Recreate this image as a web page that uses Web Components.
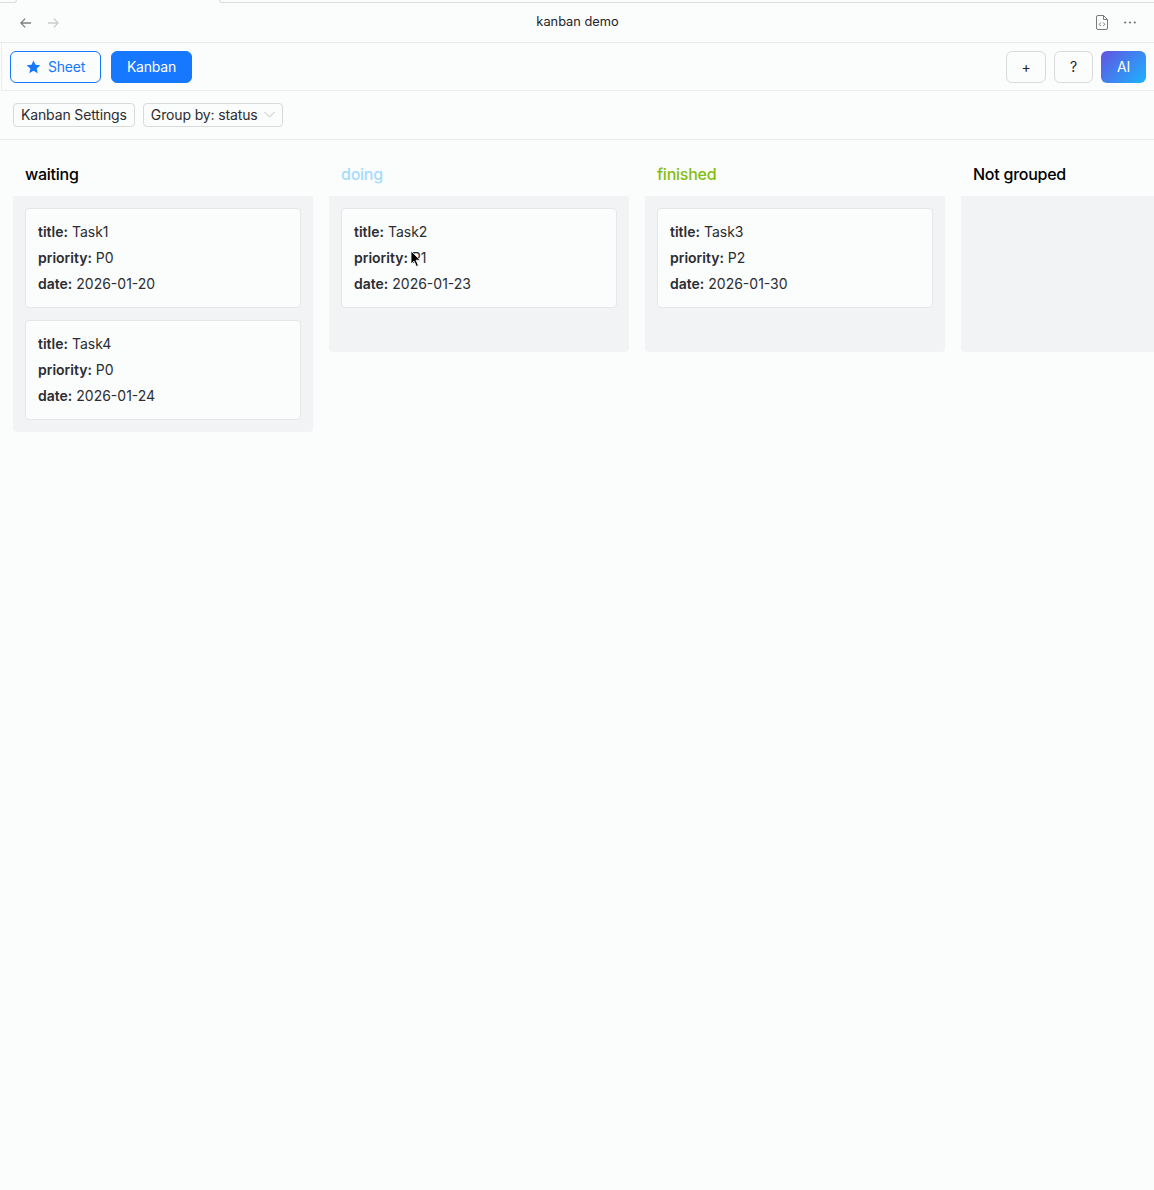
<!DOCTYPE html>
<html lang="en">
<head>
<meta charset="utf-8">
<title>kanban demo</title>
<style>
  html, body { margin: 0; height: 100%; background: #fbfcfc; }
  body { font-family: Inter, "Liberation Sans", sans-serif; color: #1f2329; overflow: hidden; }
</style>
</head>
<body>
<app-titlebar heading="kanban demo"></app-titlebar>
<app-toolbar></app-toolbar>
<app-filterbar></app-filterbar>
<kanban-board>
  <kanban-column heading="waiting" tone="#000000">
    <kanban-card task="Task1" priority="P0" date="2026-01-20"></kanban-card>
    <kanban-card task="Task4" priority="P0" date="2026-01-24"></kanban-card>
  </kanban-column>
  <kanban-column heading="doing" tone="#a5dbff">
    <kanban-card task="Task2" priority="P1" date="2026-01-23">
      <svg slot="cursor" width="12" height="18" viewBox="0 0 12 18"><path d="M1 1v13l3-3 2.400 5.400 2-.9L6 10.200h4.300z" fill="#000" stroke="#fff" stroke-width=".8"/></svg>
    </kanban-card>
  </kanban-column>
  <kanban-column heading="finished" tone="#84bc12">
    <kanban-card task="Task3" priority="P2" date="2026-01-30"></kanban-card>
  </kanban-column>
  <kanban-column heading="Not grouped" tone="#000000"></kanban-column>
</kanban-board>
<script>
  "use strict";

  function define(name, css, html, setup) {
    customElements.define(name, class extends HTMLElement {
      constructor() {
        super();
        this.attachShadow({ mode: "open" });
      }
      connectedCallback() {
        this.shadowRoot.innerHTML = "<style>" + css + "</style>" + html;
        if (setup) setup(this, this.shadowRoot);
      }
    });
  }

  define("app-tabstrip",
    ":host{display:flex;height:3px}" +
    "div{box-sizing:border-box;height:3px;border:0 solid #dcdddf}" +
    ".l{width:17px;border-width:0 1px 1px 0;border-bottom-right-radius:3px}" +
    ".m{width:202px}" +
    ".r{flex:1;border-width:0 0 1px 1px;border-bottom-left-radius:3px}",
    '<div class="l"></div><div class="m"></div><div class="r"></div>');

  define("app-titlebar",
    ":host{display:block;font-size:12.800px;color:#1f2329}" +
    ".bar{display:flex;align-items:center;justify-content:space-between;position:relative;height:39px;padding:0 18px 0 20px;border-bottom:1px solid #e9eaeb}" +
    ".nav,.acts{display:flex;align-items:center}.nav{gap:17px}.acts{gap:16px}" +
    "h1{margin:0;font:inherit;position:absolute;left:1px;right:0;top:0;line-height:37px;text-align:center;pointer-events:none}" +
    "svg{display:block}",
    '<app-tabstrip></app-tabstrip><div class="bar"><div class="nav">' +
    '<svg width="11" height="10" viewBox="0 0 11 10" fill="none" stroke="#7d7f82" stroke-width="1.300"><path d="M11 5H1M5.200.6.800 5l4.400 4.400"/></svg>' +
    '<svg width="11" height="10" viewBox="0 0 11 10" fill="none" stroke="#c9cacc" stroke-width="1.300"><path d="M0 5h10M5.800.6 10.200 5 5.800 9.400"/></svg>' +
    '</div><h1 id="h"></h1><div class="acts">' +
    '<svg width="12" height="15" viewBox="0 0 12 15" fill="none" stroke="#77797c" stroke-width="1"><path d="M2 .5h5.500L11.500 4.500V13a1.500 1.500 0 0 1-1.500 1.500H2A1.500 1.500 0 0 1 .5 13V2A1.500 1.500 0 0 1 2 .5zM7.500.5v4h4"/><path d="M4.800 7.500 3.200 9.300l1.600 1.800M7.200 7.500l1.600 1.800-1.600 1.800"/></svg>' +
    '<svg width="12" height="3" viewBox="0 0 12 3" fill="#6f7174"><circle cx="1.200" cy="1.500" r="1.100"/><circle cx="6" cy="1.500" r="1.100"/><circle cx="10.800" cy="1.500" r="1.100"/></svg>' +
    "</div></div>",
    function (host, root) { root.getElementById("h").textContent = host.getAttribute("heading"); });

  define("app-toolbar",
    ":host{display:flex;align-items:center;justify-content:space-between;height:47px;padding:0 8px;border-bottom:1px solid #ecedee;border-left:1px solid #eceded;margin-left:1px;font-size:14px}" +
    ".group{display:flex;align-items:center}.left{gap:10px}.right{gap:8px}" +
    ".btn{box-sizing:border-box;height:32px;display:flex;align-items:center;justify-content:center;border-radius:6px;border:1px solid #d9d9d9;letter-spacing:-.2px;color:#1f2329}" +
    ".sheet{width:91px;gap:7px;border-color:#1677ff;color:#1677ff}" +
    ".kanban{width:81px;background:#1677ff;border-color:#1677ff;color:#fff}" +
    ".plus{width:40px}.help{width:39px}" +
    ".ai{width:45px;border:0;color:#fff;background:linear-gradient(135deg,#6253e1,#1bb4ff)}",
    '<div class="group left"><div class="btn sheet"><svg width="15" height="14" viewBox="0 0 15 14"><path fill="#1677ff" d="M7.500.400 9.500 4.800l4.800.500-3.600 3.200 1 4.700-4.200-2.400-4.200 2.400 1-4.700L.700 5.300l4.800-.500z"/></svg><span>Sheet</span></div><div class="btn kanban">Kanban</div></div>' +
    '<div class="group right"><div class="btn plus">+</div><div class="btn help">?</div><div class="btn ai">AI</div></div>');

  define("app-filterbar",
    ":host{display:flex;align-items:center;gap:8px;height:48px;padding:0 13px;border-bottom:1px solid #e9eaeb;font-size:14px;letter-spacing:-.14px}" +
    ".chip{box-sizing:border-box;height:24px;display:flex;align-items:center;padding:0 7px 1px;border:1px solid #d9d9d9;border-radius:4px;color:#2a2d31}" +
    ".select{width:140px;justify-content:space-between}",
    '<div class="chip">Kanban Settings</div><div class="chip select"><span>Group by: status</span><svg width="11" height="7" viewBox="0 0 11 7" fill="none" stroke="#bfbfbf"><path d="M.5 1 5.500 6l5-5"/></svg></div>');

  define("kanban-board",
    ":host{display:flex;align-items:flex-start;gap:16px;padding:16px 0 0 13px;overflow:hidden}::slotted(*){flex:none}",
    "<slot></slot>");

  define("kanban-column",
    ":host{display:block;width:300px}" +
    "h2{margin:0;height:40px;box-sizing:border-box;padding:0 12px 4px;display:flex;align-items:center;font-size:16px;font-weight:500;letter-spacing:-.25px}" +
    ".body{box-sizing:border-box;min-height:156px;padding:12px;display:flex;flex-direction:column;gap:12px;background:#f2f3f5;border-radius:0 0 4px 4px}",
    '<h2 id="h"></h2><div class="body"><slot></slot></div>',
    function (host, root) {
      var h = root.getElementById("h");
      h.textContent = host.getAttribute("heading");
      h.style.color = host.getAttribute("tone");
    });

  define("kanban-card",
    ":host{display:block;position:relative;box-sizing:border-box;height:100px;padding:10px 12px;background:#fbfcfc;border:1px solid #e6e7e9;border-radius:4px;font-size:14px;color:#2a2d31}" +
    ".row{height:26px;line-height:26px;white-space:nowrap}b{font-weight:600}" +
    "::slotted([slot=cursor]){position:absolute;left:68px;top:41px}",
    '<div class="row"><b>title:</b> <span id="t"></span></div><div class="row"><b>priority:</b> <span id="p"></span></div><div class="row"><b>date:</b> <span id="d"></span></div><slot name="cursor"></slot>',
    function (host, root) {
      root.getElementById("t").textContent = host.getAttribute("task");
      root.getElementById("p").textContent = host.getAttribute("priority");
      root.getElementById("d").textContent = host.getAttribute("date");
    });
</script>
</body>
</html>
